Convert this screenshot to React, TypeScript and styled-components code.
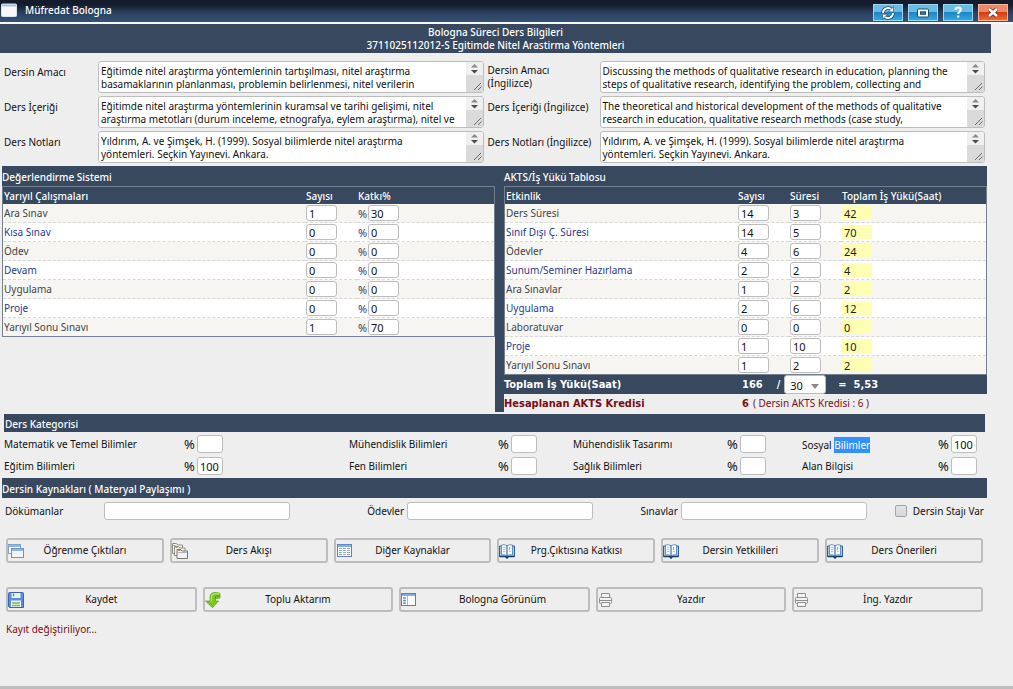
import React, { useId } from "react";
import styled, { createGlobalStyle } from "styled-components";

const navy = "#37485f";
const line = "#bdbdbd";
const maroon = "#7b0c16";

const GlobalStyle = createGlobalStyle`
  * { box-sizing: border-box; }
  body { margin: 0; background: #eeeeee; }
  body, button, input, textarea, select, table {
    font-family: "Noto Sans", Tahoma, sans-serif;
    font-size: 10px;
    line-height: 13px;
    color: #111;
  }
`;

const Window = styled.div`
  display: flex;
  flex-direction: column;
  min-height: 100vh;
  border-bottom: 3px solid ${line};
`;

const TitleBar = styled.header`
  display: flex;
  align-items: flex-start;
  height: 24px;
  padding: 3px 5px 0 1px;
  border-bottom: 2px solid #f6f7f9;
  background: linear-gradient(#141b2c 0 20%, #2b4161 60%, #365274);
`;

const Title = styled.h1`
  flex: 1;
  margin: 1px 0 0 8px;
  font-size: 10px;
  line-height: 13px;
  font-weight: 500;
  color: #fff;
`;

const TitleButtons = styled.div`
  display: flex;
  gap: 5px;
  padding-top: 1px;
`;

const TitleButton = styled.button<{ $danger?: boolean }>`
  display: flex;
  align-items: center;
  justify-content: center;
  width: 30px;
  height: 17px;
  padding: 0;
  border: 1px solid ${(p) => (p.$danger ? "#f4b9a4" : "#9cd8f2")};
  background: ${(p) =>
    p.$danger
      ? "linear-gradient(#ee8a66 0 45%, #d63a12 50%, #ee6a2c)"
      : "linear-gradient(#6cbbe2 0 45%, #1f86c4 50%, #35a5dc)"};
`;

const Banner = styled.div`
  margin-right: 22px;
  padding: 2px 0 1px;
  background: ${navy};
  color: #fff;
  text-align: center;
  font-weight: 500;
`;

const Content = styled.main`
  flex: 1;
  padding: 8px 28px 0 0;
`;

const Descriptions = styled.div`
  display: grid;
  grid-template-columns: 98px 1fr 116px 1fr;
  grid-auto-rows: 32px;
  row-gap: 3px;
`;

const DescLabel = styled.label`
  display: flex;
  align-items: center;
  padding: 0 0 9px 4px;
  margin-top: -1px;
`;

const WrappedLabel = styled(DescLabel)`
  padding-bottom: 0;
`;

const AreaBox = styled.div`
  position: relative;
  border: 1px solid ${line};
  border-radius: 3px;
  background: #fff;
  overflow: hidden;
`;

const Area = styled.textarea`
  display: block;
  width: 100%;
  height: 30px;
  padding: 3px 18px 0 2px;
  border: 0;
  background: transparent;
  resize: none;
  overflow: hidden;
`;

const ScrollArt = styled.svg`
  position: absolute;
  top: 0;
  right: 0;
`;

const Split = styled.div`
  display: grid;
  grid-template-columns: 493fr 9px 483fr;
  margin: 3px -2px 0 2px;
`;

const Panel = styled.section``;

const Divider = styled.div`
  background: ${navy};
`;

const PanelTitle = styled.h2`
  margin: 0;
  padding: 5px 0 2px;
  background: ${navy};
  color: #fff;
  font-size: 10px;
  line-height: 13px;
  font-weight: 500;
`;

const Grid = styled.table`
  width: 100%;
  table-layout: fixed;
  border-collapse: separate;
  border-spacing: 0;
  border: 1px solid #74808e;
`;

const Head = styled.th<{ $w?: number }>`
  width: ${(p) => (p.$w ? p.$w + "px" : "auto")};
  height: 17px;
  padding: 2px 0 0 1px;
  background: ${navy};
  color: #fff;
  text-align: left;
  font-weight: 500;
`;

const Row = styled.tr`
  color: #444;
  background: #f6f5f2;
  &:nth-child(even) {
    color: #1f3a93;
    background: #fff;
  }
  &:last-child > td {
    border-bottom: 0;
    height: 18px;
  }
`;

const Cell = styled.td`
  height: 19px;
  padding: 0 0 0 1px;
  border-bottom: 1px dashed #d8d8d8;
  white-space: nowrap;
`;

const CellInner = styled.div`
  display: flex;
  align-items: center;
  height: 18px;
`;

const SmallInput = styled.input`
  width: 31px;
  height: 16px;
  padding: 1px 2px 0;
  border: 1px solid ${line};
  border-radius: 3px;
  background: #fff;
  font-size: 11px;
`;

const Percent = styled.span`
  width: 10px;
  font-size: 11px;
`;

const Total = styled.output`
  width: 30px;
  height: 14px;
  padding: 0 2px;
  background: #ffffb4;
  color: #222;
  font-size: 11px;
  line-height: 15px;
`;

const SumRow = styled.div<{ $dark?: boolean }>`
  display: grid;
  grid-template-columns: 1fr 249px;
  align-items: center;
  height: ${(p) => (p.$dark ? 19 : 18)}px;
  background: ${(p) => (p.$dark ? navy : "transparent")};
  color: ${(p) => (p.$dark ? "#fff" : maroon)};
`;

const Strong = styled.strong`
  font-family: "DejaVu Sans Condensed", "DejaVu Sans", sans-serif;
  font-size: 11px;
`;

const SumValues = styled.div`
  display: flex;
  align-items: center;
  gap: 4px;
  padding-left: 4px;
`;

const Fraction = styled(Strong)`
  display: flex;
  gap: 14px;
`;

const Result = styled(Strong)`
  display: flex;
  gap: 7px;
  padding-left: 8px;
`;

const SelectBox = styled.span`
  position: relative;
  display: block;
`;

const Select = styled.select`
  display: block;
  width: 42px;
  height: 19px;
  padding: 1px 5px 0;
  border: 1px solid ${line};
  border-radius: 3px;
  background: #fff;
  font-size: 11px;
  appearance: none;
`;

const SelectArrow = styled.svg`
  position: absolute;
  top: 9px;
  right: 7px;
  pointer-events: none;
`;

const CategoryTitle = styled(PanelTitle)`
  margin: 2px 0 3px 4px;
  padding: 4px 1px 1px;
`;

const Categories = styled.div`
  display: grid;
  grid-template-columns: 345fr 224fr 229fr 183fr;
  row-gap: 4px;
  padding-left: 4px;
`;

const Category = styled.div`
  display: flex;
  align-items: center;
`;

const CategoryLabel = styled.label<{ $w: number }>`
  width: ${(p) => p.$w}px;
  padding-top: 1px;
`;

const Mark = styled.mark`
  display: inline-block;
  height: 16px;
  line-height: 16px;
  background: #3390ff;
  color: #fff;
`;

const CategoryPercent = styled.span`
  width: 13px;
  font-size: 13px;
`;

const CategoryInput = styled.input`
  width: 26px;
  height: 18px;
  padding: 0 2px;
  border: 1px solid ${line};
  border-radius: 3px;
  background: #fff;
  font-size: 11px;
`;

const ResourcesTitle = styled(PanelTitle)`
  margin: 3px -2px 4px 2px;
`;

const Resources = styled.div`
  display: grid;
  grid-template-columns: 362fr 273fr 254fr auto;
  align-items: center;
  padding: 0 1px 0 5px;
`;

const Field = styled.div<{ $gap: number }>`
  display: flex;
  align-items: center;
  gap: ${(p) => p.$gap}px;
`;

const WideInput = styled.input`
  width: 186px;
  height: 18px;
  border: 1px solid ${line};
  border-radius: 3px;
  background: #fff;
`;

const Check = styled.input`
  appearance: none;
  width: 12px;
  height: 12px;
  margin: 0;
  border: 1px solid #a4a4a4;
  border-radius: 2px;
  background: linear-gradient(#e2e4e8, #d4d7db);
`;

const Buttons = styled.div<{ $top: number }>`
  display: flex;
  gap: 6px;
  margin: ${(p) => p.$top}px 2px 0 6px;
`;

const Action = styled.button`
  display: flex;
  align-items: center;
  flex: 1;
  height: 25px;
  padding: 0;
  border: 2px solid ${line};
  border-radius: 3px;
  background: #eeeeee;
`;

const ActionText = styled.span<{ $beside?: boolean }>`
  flex: 1;
  padding-right: ${(p) => (p.$beside ? 0 : 16)}px;
`;

const Status = styled.p`
  margin: 11px 0 0 6px;
  color: ${maroon};
`;

const Icon = ({ children }: { children: React.ReactNode }) => (
  <svg width="16" height="16" viewBox="0 0 16 16" aria-hidden="true">
    {children}
  </svg>
);

const WindowIcon = () => (
  <Icon>
    <rect x="0.5" y="1" width="15" height="12.5" rx="1" fill="#f6f8fc" stroke="#d9e2f0" />
    <path d="M1 2.5h14" stroke="#a9c0e6" strokeWidth="2" />
  </Icon>
);

const CascadeIcon = () => (
  <Icon>
    <rect x="0.5" y="1.5" width="12" height="9" fill="#fafcff" stroke="#7fa3d4" />
    <path d="M1 3h11" stroke="#8fb4e6" strokeWidth="2" />
    <rect x="3.5" y="5.5" width="12" height="9" fill="#f2f7ff" stroke="#7295c8" />
    <path d="M4 7h11" stroke="#8fb4e6" strokeWidth="2" />
  </Icon>
);

const FoldersIcon = () => (
  <Icon>
    <path d="M0.5 10.5v-10h4l1 1.500h5v8.500z" fill="#fbf8f0" stroke="#8b8b86" />
    <path d="M2.500 12.500v-9h4l1 1.500h5.500v7.500z" fill="#fbf8f0" stroke="#8b8b86" />
    <path d="M5 15.500v-9h4l1 1.500h5.500v7.500z" fill="#f3f4f2" stroke="#77777a" />
    <path d="M1.500 2.500h2M3.500 4.500h2M6 7.500h2.500" stroke="#c98c4c" />
    <path d="M6 9.500h9" stroke="#a9b4c2" />
  </Icon>
);

const TableIcon = () => (
  <Icon>
    <rect x="1.500" y="1.500" width="14" height="12" fill="#fff" stroke="#5f86c2" />
    <path d="M2 3h13" stroke="#86aee6" strokeWidth="2" />
    <path d="M3 5.500h3M7 5.500h3M11 5.500h3M3 7.500h3M7 7.500h3M11 7.500h3M3 9.500h3M7 9.500h3M11 9.500h3M3 11.500h3M7 11.500h3M11 11.500h3" stroke="#93a9c9" />
  </Icon>
);

const BookIcon = () => (
  <Icon>
    <path d="M0.500 3h15v10.500h-15z" fill="#a9c8e4" stroke="#2c5f94" />
    <path d="M0.500 13.500h6l1.500 1.500 1.500-1.500h6" fill="none" stroke="#12406f" strokeWidth="1.600" />
    <path d="M2.500 2q3-1 5.500 0.700v10q-2.500-1.500-5.500-0.700zM13.500 2q-3-1-5.500 0.700v10q2.500-1.500 5.500-0.700z" fill="#f5f8fc" stroke="#4d7fb2" strokeWidth="0.800" />
    <path d="M4 4.500h2.500M4 6.500h2.500M4 8.500h2.500M10 8.500h2" stroke="#b9c4d2" />
    <path d="M10.500 4v3" stroke="#d98c5c" />
  </Icon>
);

const SaveIcon = () => (
  <Icon>
    <path d="M0.500 1.500q0-1 1-1h13q1 0 1 1v14h-14l-1-1z" fill="#5a8de0" stroke="#3a66b0" />
    <rect x="3.500" y="1" width="9" height="5" fill="#eef3fb" />
    <path d="M5.500 1.500v3" stroke="#5a8de0" strokeWidth="1.500" />
    <rect x="3" y="8.500" width="10" height="6.500" fill="#f6faf4" />
    <path d="M4 11h8M4 13.500h8" stroke="#6fb86a" strokeWidth="1.300" />
  </Icon>
);

const ArrowIcon = () => (
  <Icon>
    <path
      d="M15 1.500q-3-1.500-6-1-4 0.700-4 4v4.500h-4.500l7 6.700 6-6.700h-3v-2.500l4.500-0.500z"
      fill="#7cc61e"
      stroke="#55a012"
      strokeWidth="0.700"
    />
    <path d="M14 2q-6.500-1.300-7.500 2v5.500" fill="none" stroke="#b6e66a" strokeWidth="1.300" />
    <path d="M10.500 6.500v-2q0-1 4-0.500" fill="none" stroke="#4c930f" />
  </Icon>
);

const LayoutIcon = () => (
  <Icon>
    <rect x="0.500" y="1.500" width="14" height="12" fill="#fff" stroke="#4f7fc4" />
    <path d="M1 3h13" stroke="#86aee6" strokeWidth="2" />
    <path d="M6.500 4v9" stroke="#9dbbe2" />
    <path d="M2.200 6h2.600M2.200 8.500h2.600M2.200 11h2.600" stroke="#4a80d0" strokeWidth="1.500" />
  </Icon>
);

const PrinterIcon = () => (
  <Icon>
    <g fill="#f2f2f2" stroke="#8e8e8e">
      <path d="M3.500 6v-4.500h8v4.500" />
      <rect x="1.500" y="5.500" width="12" height="6" rx="1" />
      <path d="M2 8.500h11" />
      <path d="M3.500 10.500h8v4h-8z" />
    </g>
  </Icon>
);

const ScrollBar = () => (
  <ScrollArt width="17" height="30" aria-hidden="true">
    <rect width="17" height="13" fill="#f0f0f0" />
    <rect y="13" width="17" height="17" fill="#dadada" />
    <path d="M5 5.500L8.500 2L12 5.500z" fill="#8a8a8a" />
    <path d="M5 8L8.500 11.500L12 8z" fill="#4c4c4c" />
    <path d="M8 28L15 21M12 28L15.500 24.500" stroke="#6a6a6a" />
  </ScrollArt>
);

type Description = { label: string; text: string; wrap?: boolean };

const notes =
  "Yıldırım, A. ve Şimşek, H. (1999). Sosyal bilimlerde nitel araştırma\nyöntemleri. Seçkin Yayınevi. Ankara.";

const descriptions: Description[] = [
  {
    label: "Dersin Amacı",
    text: "Eğitimde nitel araştırma yöntemlerinin tartışılması, nitel araştırma basamaklarının planlanması, problemin belirlenmesi, nitel verilerin",
  },
  {
    label: "Dersin Amacı (İngilizce)",
    wrap: true,
    text: "Discussing the methods of qualitative research in education, planning the steps of qualitative research, identifying the problem, collecting and",
  },
  {
    label: "Ders İçeriği",
    text: "Eğitimde nitel araştırma yöntemlerinin kuramsal ve tarihi gelişimi, nitel araştırma metotları (durum inceleme, etnografya, eylem araştırma), nitel ve",
  },
  {
    label: "Ders İçeriği (İngilizce)",
    text: "The theoretical and historical development of the methods of qualitative research in education, qualitative research methods (case study,",
  },
  { label: "Ders Notları", text: notes },
  { label: "Ders Notları (İngilizce)", text: notes },
];

const DescriptionField = ({ label, text, wrap }: Description) => {
  const id = useId();
  const Label = wrap ? WrappedLabel : DescLabel;
  return (
    <>
      <Label htmlFor={id}>{wrap ? <span>Dersin Amacı<br />(İngilizce)</span> : label}</Label>
      <AreaBox>
        <Area id={id} defaultValue={text} spellCheck={false} />
        <ScrollBar />
      </AreaBox>
    </>
  );
};

const assessments: [string, number, number][] = [
  ["Ara Sınav", 1, 30],
  ["Kısa Sınav", 0, 0],
  ["Ödev", 0, 0],
  ["Devam", 0, 0],
  ["Uygulama", 0, 0],
  ["Proje", 0, 0],
  ["Yarıyıl Sonu Sınavı", 1, 70],
];

const workload: [string, number, number][] = [
  ["Ders Süresi", 14, 3],
  ["Sınıf Dışı Ç. Süresi", 14, 5],
  ["Ödevler", 4, 6],
  ["Sunum/Seminer Hazırlama", 2, 2],
  ["Ara Sınavlar", 1, 2],
  ["Uygulama", 2, 6],
  ["Laboratuvar", 0, 0],
  ["Proje", 1, 10],
  ["Yarıyıl Sonu Sınavı", 1, 2],
];

const categories: [string, string, number, string?][] = [
  ["Matematik ve Temel Bilimler", "", 180],
  ["Mühendislik Bilimleri", "", 149],
  ["Mühendislik Tasarımı", "", 154],
  ["Sosyal", "100", 136, "Bilimler"],
  ["Eğitim Bilimleri", "100", 180],
  ["Fen Bilimleri", "", 149],
  ["Sağlık Bilimleri", "", 154],
  ["Alan Bilgisi", "", 136],
];

type Command = { text: string; Glyph: React.FC; beside?: boolean };

const tools: Command[] = [
  { text: "Öğrenme Çıktıları", Glyph: CascadeIcon },
  { text: "Ders Akışı", Glyph: FoldersIcon },
  { text: "Diğer Kaynaklar", Glyph: TableIcon },
  { text: "Prg.Çıktısına Katkısı", Glyph: BookIcon },
  { text: "Dersin Yetkilileri", Glyph: BookIcon },
  { text: "Ders Önerileri", Glyph: BookIcon },
];

const commands: Command[] = [
  { text: "Kaydet", Glyph: SaveIcon },
  { text: "Toplu Aktarım", Glyph: ArrowIcon },
  { text: "Bologna Görünüm", Glyph: LayoutIcon, beside: true },
  { text: "Yazdır", Glyph: PrinterIcon },
  { text: "İng. Yazdır", Glyph: PrinterIcon },
];

const ActionButtons = ({ items, top }: { items: Command[]; top: number }) => (
  <Buttons $top={top}>
    {items.map(({ text, Glyph, beside }) => (
      <Action type="button" key={text}>
        <Glyph />
        <ActionText $beside={beside}>{text}</ActionText>
      </Action>
    ))}
  </Buttons>
);

const ResourceField = ({ label, gap }: { label: string; gap: number }) => {
  const id = useId();
  return (
    <Field $gap={gap}>
      <label htmlFor={id}>{label}</label>
      <WideInput id={id} />
    </Field>
  );
};

export default function App() {
  return (
    <Window>
      <GlobalStyle />
      <TitleBar>
        <WindowIcon />
        <Title>Müfredat Bologna</Title>
        <TitleButtons>
          <TitleButton type="button" aria-label="Yenile">
            <svg width="14" height="14" viewBox="0 0 14 14" fill="none">
              <path d="M2 7a5 5 0 0 1 8.500-3.500M12 7a5 5 0 0 1-8.500 3.500" stroke="#234a66" strokeWidth="3.600" />
              <path d="M2 7a5 5 0 0 1 8.500-3.500M12 7a5 5 0 0 1-8.500 3.500" stroke="#fff" strokeWidth="2" />
              <path d="M12.500 0.800v5h-5zM1.500 13.200v-5h5z" fill="#fff" stroke="#234a66" strokeWidth="0.600" />
            </svg>
          </TitleButton>
          <TitleButton type="button" aria-label="Büyüt">
            <svg width="12" height="10" viewBox="0 0 12 10">
              <rect x="0.500" y="1" width="11" height="8" rx="1" fill="#fff" stroke="#234a66" />
              <rect x="3.500" y="3.800" width="5" height="2.500" fill="#2b83bc" stroke="#234a66" />
            </svg>
          </TitleButton>
          <TitleButton type="button" aria-label="Yardım">
            <svg width="10" height="13" viewBox="0 0 10 13" fill="none">
              <path d="M2.500 4q0-2.500 2.700-2.500t2.500 2.300q0 1.400-1.500 2.200-1 0.600-1 2M5.200 9.600v2" stroke="#fff" strokeWidth="2.200" />
            </svg>
          </TitleButton>
          <TitleButton type="button" $danger aria-label="Kapat">
            <svg width="12" height="11" viewBox="0 0 12 11" fill="none">
              <path d="M2 2l8 7M10 2l-8 7" stroke="#5d2a1c" strokeWidth="4" />
              <path d="M2 2l8 7M10 2l-8 7" stroke="#fff" strokeWidth="2.600" />
            </svg>
          </TitleButton>
        </TitleButtons>
      </TitleBar>
      <Banner>
        Bologna Süreci Ders Bilgileri
        <br />
        3711025112012-S Egitimde Nitel Arastirma Yöntemleri
      </Banner>
      <Content>
        <Descriptions>
          {descriptions.map((d) => (
            <DescriptionField key={d.label} {...d} />
          ))}
        </Descriptions>

        <Split>
          <Panel>
            <PanelTitle>Değerlendirme Sistemi</PanelTitle>
            <Grid>
              <thead>
                <tr>
                  <Head>Yarıyıl Çalışmaları</Head>
                  <Head $w={52}>Sayısı</Head>
                  <Head $w={137}>Katkı%</Head>
                </tr>
              </thead>
              <tbody>
                {assessments.map(([name, count, share]) => (
                  <Row key={name}>
                    <Cell>{name}</Cell>
                    <Cell>
                      <CellInner>
                        <SmallInput defaultValue={count} aria-label={name + " sayısı"} />
                      </CellInner>
                    </Cell>
                    <Cell>
                      <CellInner>
                        <Percent>%</Percent>
                        <SmallInput defaultValue={share} aria-label={name + " katkı yüzdesi"} />
                      </CellInner>
                    </Cell>
                  </Row>
                ))}
              </tbody>
            </Grid>
          </Panel>
          <Divider />
          <Panel>
            <PanelTitle>AKTS/İş Yükü Tablosu</PanelTitle>
            <Grid>
              <thead>
                <tr>
                  <Head>Etkinlik</Head>
                  <Head $w={52}>Sayısı</Head>
                  <Head $w={52}>Süresi</Head>
                  <Head $w={145}>Toplam İş Yükü(Saat)</Head>
                </tr>
              </thead>
              <tbody>
                {workload.map(([name, count, hours]) => (
                  <Row key={name}>
                    <Cell>{name}</Cell>
                    <Cell>
                      <CellInner>
                        <SmallInput defaultValue={count} aria-label={name + " sayısı"} />
                      </CellInner>
                    </Cell>
                    <Cell>
                      <CellInner>
                        <SmallInput defaultValue={hours} aria-label={name + " süresi"} />
                      </CellInner>
                    </Cell>
                    <Cell>
                      <CellInner>
                        <Total>{count * hours}</Total>
                      </CellInner>
                    </Cell>
                  </Row>
                ))}
              </tbody>
            </Grid>
            <SumRow $dark>
              <Strong>Toplam İş Yükü(Saat)</Strong>
              <SumValues>
                <Fraction>
                  <span>166</span>
                  <span>/</span>
                </Fraction>
                <SelectBox>
                  <Select defaultValue="30" aria-label="Bölen">
                    <option>25</option>
                    <option>30</option>
                  </Select>
                  <SelectArrow width="8" height="5" aria-hidden="true">
                    <path d="M0 0h8L4 5z" fill="#8a8a8a" />
                  </SelectArrow>
                </SelectBox>
                <Result>
                  <span>=</span>
                  <span>5,53</span>
                </Result>
              </SumValues>
            </SumRow>
            <SumRow>
              <Strong>Hesaplanan AKTS Kredisi</Strong>
              <SumValues>
                <Strong>6</Strong>
                <span>( Dersin AKTS Kredisi : 6 )</span>
              </SumValues>
            </SumRow>
          </Panel>
        </Split>

        <CategoryTitle>Ders Kategorisi</CategoryTitle>
        <Categories>
          {categories.map(([name, value, width, marked], i) => (
            <Category key={name}>
              <CategoryLabel $w={width} htmlFor={"category-" + i}>
                {name}
                {marked && (
                  <>
                    {" "}
                    <Mark>{marked}</Mark>
                  </>
                )}
              </CategoryLabel>
              <CategoryPercent>%</CategoryPercent>
              <CategoryInput id={"category-" + i} defaultValue={value} />
            </Category>
          ))}
        </Categories>

        <ResourcesTitle>Dersin Kaynakları ( Materyal Paylaşımı )</ResourcesTitle>
        <Resources>
          <ResourceField label="Dökümanlar" gap={41} />
          <ResourceField label="Ödevler" gap={3} />
          <ResourceField label="Sınavlar" gap={3} />
          <Field $gap={6}>
            <Check type="checkbox" id="internship" />
            <label htmlFor="internship">Dersin Stajı Var</label>
          </Field>
        </Resources>

        <ActionButtons items={tools} top={18} />
        <ActionButtons items={commands} top={24} />
        <Status role="status">Kayıt değiştiriliyor...</Status>
      </Content>
    </Window>
  );
}
